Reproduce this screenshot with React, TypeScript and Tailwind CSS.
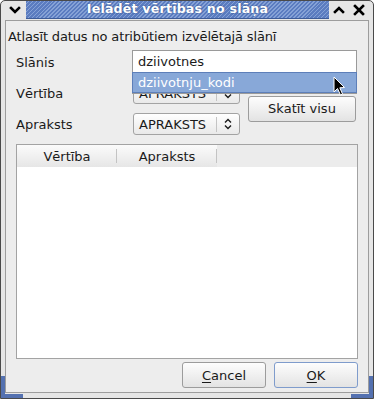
import React from "react";

const ComboArrows: React.FC = () => (
    <div className="flex items-center h-full">
        <div className="w-px h-[15px] bg-[#c4c4c4]" />
        <svg width="20" height="14" viewBox="0 0 20 14" className="ml-[1px]">
            <path d="M7 5.5 L10 2.5 L13 5.5" fill="none" stroke="#1a1a1a" strokeWidth="1.4" />
            <path d="M7 8.5 L10 11.5 L13 8.5" fill="none" stroke="#1a1a1a" strokeWidth="1.4" />
        </svg>
    </div>
);

const Combo: React.FC<{ value: string; className?: string }> = ({ value, className }) => (
    <div
        className={
            "flex items-center justify-between h-[22px] pl-[5px] pr-[1px] rounded-[3px] border border-[#a3a3a3] bg-gradient-to-b from-[#ffffff] to-[#e9e9e9] text-[13px] text-[#1a1a1a] " +
            (className ?? "")
        }
    >
        <span>{value}</span>
        <ComboArrows />
    </div>
);

const Button: React.FC<{ children: React.ReactNode; focused?: boolean; className?: string }> = ({
    children,
    focused,
    className,
}) => (
    <div
        className={
            "flex items-center justify-center rounded-[3px] border bg-gradient-to-b from-[#fdfdfd] to-[#e3e3e3] text-[13px] text-[#1a1a1a] " +
            (focused ? "border-[#7f9ccc] " : "border-[#9c9c9c] ") +
            (className ?? "")
        }
    >
        {children}
    </div>
);

const TitleIcon: React.FC<{ d: string }> = ({ d }) => (
    <svg width="20" height="18" viewBox="0 0 20 18">
        <path d={d} fill="none" stroke="#000" strokeWidth="2.6" strokeLinecap="square" />
    </svg>
);

export default function App() {
    return (
        <div className="w-[374px] h-[399px] bg-white font-['DejaVu_Sans',sans-serif]">
            <div className="relative w-[374px] h-[399px] flex flex-col border border-[#4a4a4a] rounded-t-[5px] bg-[#e6e6e6] overflow-hidden">
                {/* title bar */}
                <div className="flex h-[18px] shrink-0">
                    <div className="w-[25px] flex items-center justify-center pl-[2px]">
                        <TitleIcon d="M6 7 L10 11 L14 7" />
                    </div>
                    <div className="flex-1 flex items-center justify-center bg-[repeating-linear-gradient(135deg,#5b7cc0_0px,#5b7cc0_1.6px,#86a2d6_1.6px,#86a2d6_2.8px)] border-b border-[#3d5b98]">
                        <span className="text-white text-[12.6px] font-bold tracking-[0.2px] [text-shadow:0_0_2px_#2d4a86]">
                            Ielādēt vērtības no slāņa
                        </span>
                    </div>
                    <div className="w-[44px] flex items-center justify-start">
                        <TitleIcon d="M6 11 L10 7 L14 11" />
                        <TitleIcon d="M6 5 L14 13 M14 5 L6 13" />
                    </div>
                </div>

                {/* frame */}
                <div className="flex-1 flex px-[4px] pb-[5px] pt-[1px]">
                    <div className="flex-1 flex flex-col border border-[#9d9d9d] bg-[#ededed] text-[13px] text-[#1a1a1a] leading-[15px]">
                        <div className="pl-[2px] pt-[8px] tracking-[-0.14px]">
                            Atlasīt datus no atribūtiem izvēlētajā slānī
                        </div>

                        <div className="relative mt-[7px] ml-[10px] grid grid-cols-[109px_107px_108px] gap-x-[8px] gap-y-[9px]">
                            <div className="flex items-center">Slānis</div>
                            <Combo value="dziivotnes" className="col-span-2" />

                            <div className="flex items-center">Vērtība</div>
                            <Combo value="APRAKSTS" />
                            <div className="row-span-2 flex items-center">
                                <Button className="w-[108px] h-[26px]">Skatīt visu</Button>
                            </div>

                            <div className="flex items-center">Apraksts</div>
                            <Combo value="APRAKSTS" />

                            {/* open dropdown popup */}
                            <div className="absolute left-[116px] top-[-1px] w-[225px] border border-[#9a9a9a] bg-white">
                                <div className="h-[21px] flex items-center pl-[5px]">dziivotnes</div>
                                <div className="h-[21px] flex items-center pl-[5px] bg-[#88a8d8] border border-[#5d7fb9] -mx-px text-white">
                                    dziivotnju_kodi
                                </div>
                            </div>
                        </div>

                        {/* tree view */}
                        <div className="flex-1 mt-[9px] mx-[10px] border border-[#a3a3a3] bg-white flex flex-col">
                            <div className="flex h-[22px] bg-[#ececec]">
                                <div className="w-[100px] flex items-center justify-center relative bg-gradient-to-b from-[#fbfbfb] to-[#e6e6e6]">
                                    Vērtība
                                    <div className="absolute right-0 top-[4px] w-px h-[14px] bg-[#c3c3c3]" />
                                </div>
                                <div className="w-[100px] flex items-center justify-center relative bg-gradient-to-b from-[#fbfbfb] to-[#e6e6e6]">
                                    Apraksts
                                    <div className="absolute right-0 top-[4px] w-px h-[14px] bg-[#c3c3c3]" />
                                </div>
                            </div>
                            <div className="flex-1" />
                        </div>

                        <div className="flex justify-end gap-[8px] mt-[3px] mr-[10px] mb-[4px]">
                            <Button className="w-[84px] h-[26px]">
                                <span>
                                    <span className="underline underline-offset-2">C</span>ancel
                                </span>
                            </Button>
                            <Button focused className="w-[84px] h-[26px]">
                                <span>
                                    <span className="underline underline-offset-2">O</span>K
                                </span>
                            </Button>
                        </div>
                    </div>
                </div>

                {/* resize corners */}
                <div className="absolute left-0 bottom-0 w-[22px] h-[4px] bg-[#5471b0]" />
                <div className="absolute left-0 bottom-0 w-[4px] h-[22px] bg-[#5471b0]" />
                <div className="absolute right-0 bottom-0 w-[22px] h-[4px] bg-[#5471b0]" />
                <div className="absolute right-0 bottom-0 w-[4px] h-[22px] bg-[#5471b0]" />

                {/* mouse pointer */}
                <svg className="absolute left-[332px] top-[75px]" width="14" height="22" viewBox="0 0 14 22">
                    <path
                        d="M1 1 L1 16 L4.5 12.5 L7.5 19 L9.5 18 L6.8 11.8 L11.5 11.5 Z"
                        fill="#000"
                        stroke="#fff"
                        strokeWidth="1"
                    />
                </svg>
            </div>
        </div>
    );
}
